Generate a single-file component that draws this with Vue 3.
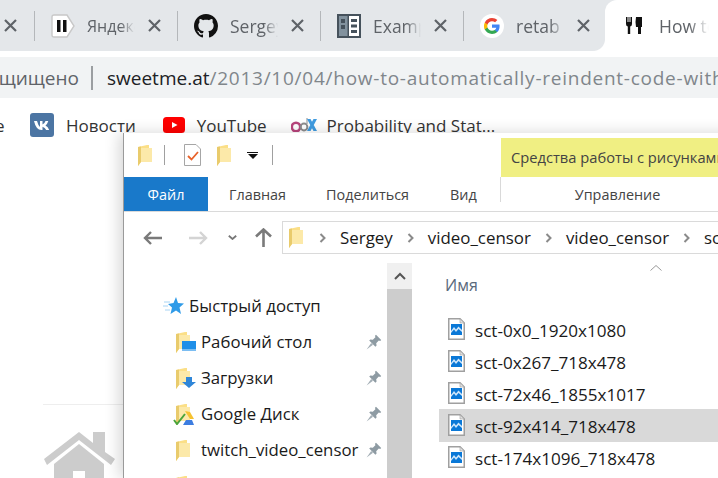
<template>
  <div class="screen">
    <svg class="defs" width="0" height="0">
      <symbol id="folder" viewBox="0 0 14 21">
        <path d="M0 2 L9 0 H11 V3 H14 V17 H3 L0 21 Z" fill="#fbdf87" />
        <path d="M0 2 L3 1.4 V17 L0 21 Z" fill="#e9cb6c" />
        <path d="M3 3 H14 V17 H3 Z" fill="#fce9a9" />
      </symbol>
      <symbol id="pin" viewBox="0 0 16 16">
        <path d="M10 .8 L15.2 6 L14.2 7 L12.8 6.6 L10.2 9.2 L10.6 11.6 L9.4 12.8 L3.2 6.6 L4.4 5.4 L6.8 5.8 L9.4 3.2 L9 1.8 Z" fill="#8e9ba3" />
        <path d="M5.2 9 L.6 15.4 L7 10.8 Z" fill="#a3aeb5" />
      </symbol>
      <symbol id="picfile" viewBox="0 0 17 22">
        <path d="M.75.75 H12 L16.25 5 V21.25 H.75 Z" fill="#fff" stroke="#a0a0a0" stroke-width="1.5" />
        <path d="M12 .75 V5 H16.25 Z" fill="#e0e0e0" stroke="#a0a0a0" stroke-width=".6" />
        <path d="M3 6 H14 V17 H3 Z" fill="#0a78d7" />
        <path d="M3 13 L6 9 L8 11.5 L10.5 8.5 L14 12 V14 L10.5 11 L8 14 L6 11.5 L3 15 Z" fill="#cfe6fa" />
      </symbol>
    </svg>

    <header class="tabstrip">
      <div class="tab tab--cut">
        <svg class="tab__close" viewBox="0 0 13 13"><path d="M1 1 L12 12 M12 1 L1 12" /></svg>
      </div>
      <div v-for="tab in tabs" :key="tab.title" class="tab">
        <svg v-if="tab.icon === 'yandex'" class="tab__icon" viewBox="0 0 24 24">
          <path d="M3 1 H16 L23 12 L16 23 H3 Q1 23 1 21 V3 Q1 1 3 1 Z" fill="#fff" stroke="#c8c8c8" stroke-width="1.4" />
          <path d="M6 6 H9.5 V18 H6 Z M12 6 H15.5 V18 H12 Z" fill="#111" />
        </svg>
        <svg v-else-if="tab.icon === 'github'" class="tab__icon" viewBox="0 0 16 16">
          <path fill="#111" d="M8 0C3.58 0 0 3.58 0 8c0 3.54 2.29 6.53 5.47 7.59.4.07.55-.17.55-.38 0-.19-.01-.82-.01-1.49-2.01.37-2.53-.49-2.69-.94-.09-.23-.48-.94-.82-1.13-.28-.15-.68-.52-.01-.53.63-.01 1.08.58 1.23.82.72 1.21 1.87.87 2.33.66.07-.52.28-.87.51-1.07-1.78-.2-3.64-.89-3.64-3.95 0-.87.31-1.59.82-2.15-.08-.2-.36-1.02.08-2.12 0 0 .67-.21 2.2.82.64-.18 1.32-.27 2-.27s1.36.09 2 .27c1.53-1.04 2.2-.82 2.2-.82.44 1.1.16 1.92.08 2.12.51.56.82 1.27.82 2.15 0 3.07-1.87 3.75-3.65 3.95.29.25.54.73.54 1.48 0 1.07-.01 1.93-.01 2.2 0 .21.15.46.55.38A8.01 8.01 0 0 0 16 8c0-4.42-3.58-8-8-8z" />
        </svg>
        <svg v-else-if="tab.icon === 'example'" class="tab__icon" viewBox="0 0 24 24">
          <path d="M0 0 H24 V24 H0 Z" fill="#46525c" />
          <path d="M2 2 H10.5 V22 H2 Z" fill="#82929e" />
          <path d="M4 5 H8 V9 H4 Z M4 11 H8 V15 H4 Z" fill="#46525c" />
          <path d="M12 2 H22 V22 H12 Z" fill="#fff" />
          <path d="M14 5 H20 V8 H14 Z M14 10.5 H20 V13.5 H14 Z M14 16 H20 V19 H14 Z" fill="#46525c" />
        </svg>
        <svg v-else class="tab__icon" viewBox="0 0 24 24">
          <circle cx="12" cy="12" r="12" fill="#fff" />
          <path d="M19.6 12.2c0-.6-.05-1.1-.15-1.6H12v3.1h4.3c-.2 1-.75 1.85-1.6 2.4v2h2.6c1.5-1.4 2.3-3.4 2.3-5.9z" fill="#4285f4" />
          <path d="M12 20c2.15 0 3.95-.7 5.3-1.9l-2.6-2c-.7.5-1.6.75-2.7.75-2.1 0-3.85-1.4-4.5-3.3H4.8v2.05C6.15 18.2 8.85 20 12 20z" fill="#34a853" />
          <path d="M7.5 13.55c-.35-1-.35-2.1 0-3.1V8.4H4.8c-1.1 2.2-1.1 5 0 7.2z" fill="#fbbc05" />
          <path d="M12 7.15c1.2 0 2.25.4 3.1 1.2l2.3-2.3C16 4.75 14.15 4 12 4 8.85 4 6.15 5.8 4.8 8.4l2.7 2.05c.65-1.9 2.4-3.3 4.5-3.3z" fill="#ea4335" />
        </svg>
        <span class="tab__title" :class="{ 'tab__title--ru': tab.icon === 'yandex' }">{{ tab.title }}</span>
        <svg class="tab__close" viewBox="0 0 13 13"><path d="M1 1 L12 12 M12 1 L1 12" /></svg>
      </div>
      <div class="tab-active">
        <svg class="tab-active__icon" viewBox="0 0 17 17">
          <path d="M0 0 H1.5 V5 H2.5 V0 H3.5 V5 H4.5 V0 H6 V7 Q6 9 4.2 9.5 V17 H1.8 V9.5 Q0 9 0 7 Z" fill="#111" />
          <path d="M10 0 H16 V10 H15 V17 H12 V10 H10 Q9 5 10 0 Z" fill="#111" />
        </svg>
        <span class="tab__title tab__title--active">How to automatically</span>
      </div>
    </header>

    <div class="omnibox">
      <span class="omnibox__secure"><span>Не защищено</span></span>
      <span class="omnibox__sep"></span>
      <span class="omnibox__url"><b>sweetme.at</b>/2013/10/04/how-to-automatically-reindent-code-with-sublime-text</span>
    </div>

    <nav class="bookmarks">
      <span class="bookmarks__cut">е</span>
      <svg class="bm-icon" viewBox="0 0 24 24">
        <rect width="24" height="24" rx="3" fill="#4c75a3" />
        <path d="M4 8 H7 Q8 12 10 14 V8 H12.5 V11.5 Q14.5 11 15.5 8 H18.3 Q17.4 11 15.5 12.6 Q18 14 19.2 17 H16.2 Q15 14.5 12.5 13.8 V17 H11.5 Q6 17 4 8 Z" fill="#fff" />
      </svg>
      <span class="bm-label">Новости</span>
      <svg class="bm-icon bm-icon--yt" viewBox="0 0 22 16">
        <rect width="22" height="16" rx="3.5" fill="#f00" />
        <path d="M9 5 L14.5 8 L9 11 Z" fill="#fff" />
      </svg>
      <span class="bm-label bm-label--yt">YouTube</span>
      <svg class="bm-icon bm-icon--edx" viewBox="0 0 26 14">
        <circle cx="5" cy="9" r="4.2" fill="none" stroke="#b8457c" stroke-width="2.6" />
        <circle cx="13" cy="9" r="3.4" fill="none" stroke="#8d8d8d" stroke-width="2" />
        <path d="M15.5 0 H16.5 V6 H15.5 Z" fill="#8d8d8d" />
        <path d="M16 1 H19.5 L26 13 H22.5 Z M22.5 1 H26 L19.5 13 H16 Z" fill="#3f9be0" />
      </svg>
      <span class="bm-label">Probability and Stat...</span>
    </nav>

    <main class="page">
      <div class="page__rule"></div>
      <svg class="page__home" viewBox="0 0 72 48">
        <path d="M1 27 L36 0 L50 11 V0 H62 V20 L72 27 L68 33 L36 8 L4 33 Z" fill="#ccc" />
        <path d="M11 32 L36 12 L61 32 V48 H42 V39 H30 V48 H11 Z" fill="#ccc" />
      </svg>
    </main>

    <section class="win">
      <div class="win__top">
        <div class="qat">
          <svg class="qat__folder"><use href="#folder" /></svg>
          <span class="qat__sep"></span>
          <svg class="qat__check" viewBox="0 0 17 22">
            <path d="M.5.5 H12 L16.5 5 V21.5 H.5 Z" fill="#fff" stroke="#a6a6a6" />
            <path d="M4 12 L7.5 15.5 L14 8" fill="none" stroke="#e8622a" stroke-width="1.8" />
          </svg>
          <svg class="qat__folder"><use href="#folder" /></svg>
          <span class="qat__menu"><i></i><b></b></span>
          <span class="qat__sep qat__sep--end"></span>
        </div>
        <div class="ctx-title">Средства работы с рисунками</div>
      </div>

      <div class="ribbon">
        <span class="ribbon__file">Файл</span>
        <span class="ribbon__tab ribbon__tab--main">Главная</span>
        <span class="ribbon__tab ribbon__tab--share">Поделиться</span>
        <span class="ribbon__tab ribbon__tab--view">Вид</span>
        <span class="ribbon__manage">Управление</span>
      </div>

      <div class="navbar">
        <div class="navbar__btns">
          <svg class="nav-back" viewBox="0 0 19 14"><path d="M8 1 L2 7 L8 13 M2 7 H19" fill="none" stroke="#7a7a7a" stroke-width="2.4" /></svg>
          <svg class="nav-fwd" viewBox="0 0 19 14"><path d="M11 1 L17 7 L11 13 M17 7 H0" fill="none" stroke="#d4d4d4" stroke-width="2.4" /></svg>
          <svg class="nav-down" viewBox="0 0 9 5"><path d="M.8.8 L4.5 4 L8.2.8" fill="none" stroke="#777" stroke-width="1.8" /></svg>
          <svg class="nav-up" viewBox="0 0 17 19"><path d="M1 8.5 L8.5 1.5 L16 8.5 M8.5 1.5 V19" fill="none" stroke="#7a7a7a" stroke-width="2.6" /></svg>
        </div>
        <div class="crumbs">
          <svg class="crumbs__folder"><use href="#folder" /></svg>
          <template v-for="c in crumbs" :key="c.id">
            <svg class="crumbs__arrow" viewBox="0 0 7 10"><path d="M1.5 1 L5.5 5 L1.5 9" fill="none" stroke="#8a8a8a" stroke-width="2" /></svg>
            <span class="crumbs__name">{{ c.name }}</span>
          </template>
        </div>
      </div>

      <div class="panes">
        <aside class="tree">
          <div class="tree__list">
            <div class="tree__quick">
              <svg class="tree__star" viewBox="0 0 21 18">
                <path d="M13 0 L15 6 L21 6.5 L16.5 10.5 L18 17 L13 13.5 L7.5 17 L9 10.5 L5 7 L10.5 6 Z" fill="#2f9be8" />
                <path d="M1 5 H7 M0 9 H5 M2 13 H7" stroke="#a8d4f4" stroke-width="1" />
              </svg>
              <span class="tree__name">Быстрый доступ</span>
            </div>
            <div v-for="item in tree" :key="item.name" class="tree__row">
              <span class="tree__icon">
                <svg class="tree__folder"><use href="#folder" /></svg>
                <svg v-if="item.badge === 'desktop'" class="tree__badge" viewBox="0 0 14 11">
                  <path d="M0 0 H14 V10 H0 Z" fill="#1f8fe8" />
                  <path d="M0 9 H14" stroke="#d7ecfb" />
                </svg>
                <svg v-if="item.badge === 'down'" class="tree__badge" viewBox="0 0 14 11">
                  <path d="M4 0 H10 V5 H14 L7 11 L0 5 H4 Z" fill="#2f86d8" />
                </svg>
                <svg v-if="item.badge === 'drive'" class="tree__badge tree__badge--drive" viewBox="0 0 21 14">
                  <path d="M12 0 L17 8 H21 L17 1 Z" fill="#f6c231" />
                  <path d="M10 14 H21 L19 9 H13 Z" fill="#3d7de0" />
                  <path d="M1 9 L4 13 L12 3" fill="none" stroke="#4aa43a" stroke-width="2" />
                </svg>
              </span>
              <span class="tree__name">{{ item.name }}</span>
              <svg class="tree__pin"><use href="#pin" /></svg>
            </div>
          </div>
          <div class="scroll">
            <div class="scroll__btn">
              <svg viewBox="0 0 12 8" width="12" height="8"><path d="M1 7 L6 2 L11 7" fill="none" stroke="#555" stroke-width="2" /></svg>
            </div>
            <div class="scroll__thumb"></div>
          </div>
        </aside>

        <div class="files">
          <svg class="files__sort" viewBox="0 0 12 6"><path d="M.5 5.5 L6 .5 L11.5 5.5" fill="none" stroke="#999" /></svg>
          <div class="files__head">Имя</div>
          <div
            v-for="file in files"
            :key="file.name"
            class="file"
            :class="{ 'file--sel': file.selected }"
          >
            <svg class="file__icon"><use href="#picfile" /></svg>
            <span class="file__name">{{ file.name }}</span>
          </div>
        </div>
      </div>
    </section>
  </div>
</template>

<script setup>
const tabs = [
  { title: 'Яндекс', icon: 'yandex' },
  { title: 'Sergey', icon: 'github' },
  { title: 'Example', icon: 'example' },
  { title: 'retab', icon: 'google' }
];

const crumbs = [
  { id: 0, name: 'Sergey' },
  { id: 1, name: 'video_censor' },
  { id: 2, name: 'video_censor' },
  { id: 3, name: 'screenshots' }
];

const tree = [
  { name: 'Рабочий стол', badge: 'desktop' },
  { name: 'Загрузки', badge: 'down' },
  { name: 'Google Диск', badge: 'drive' },
  { name: 'twitch_video_censor' },
  { name: 'video_censor' }
];

const files = [
  { name: 'sct-0x0_1920x1080' },
  { name: 'sct-0x267_718x478' },
  { name: 'sct-72x46_1855x1017' },
  { name: 'sct-92x414_718x478', selected: true },
  { name: 'sct-174x1096_718x478' }
];
</script>

<style>
html, body {
  margin: 0;
  background: #fff;
  overflow: hidden;
}
</style>

<style scoped>
.screen {
  position: relative;
  width: 718px;
  height: 478px;
  overflow: hidden;
  font-family: "Open Sans", "Noto Sans", sans-serif;
  color: #111;
  background: #fff;
}

.defs {
  position: absolute;
}

.tabstrip {
  height: 51px;
  background: #e4e7ea;
  display: flex;
}

.tab {
  flex: 0 0 143px;
  height: 51px;
  box-sizing: border-box;
  display: flex;
  align-items: center;
  padding-left: 17px;
  position: relative;
}

.tab::after {
  content: "";
  position: absolute;
  right: -1px;
  top: 11px;
  height: 30px;
  width: 1px;
  background: #b4b7ba;
}

.tab--cut {
  flex-basis: 34px;
  padding-left: 4px;
}

.tab:nth-child(5)::after {
  display: none;
}

.tab__icon {
  width: 24px;
  height: 24px;
  flex: none;
}

.tab__title {
  margin-left: 12px;
  width: 48px;
  flex: none;
  overflow: hidden;
  white-space: nowrap;
  font-size: 17.5px;
  color: #5f6368;
  -webkit-mask-image: linear-gradient(90deg, #000 70%, transparent);
  mask-image: linear-gradient(90deg, #000 70%, transparent);
}

.tab__title--ru {
  font-size: 16px;
}

.tab__close {
  width: 13px;
  height: 13px;
  margin-left: 13px;
  flex: none;
  fill: none;
  stroke: #5f6368;
  stroke-width: 2.2;
}

.tab--cut .tab__close {
  margin-left: 0;
}

.tab-active {
  flex: 1;
  position: relative;
  background: #fff;
  border-radius: 12px 0 0 0;
  display: flex;
  align-items: center;
  padding-left: 21px;
  margin-left: -1px;
}

.tab-active::before {
  content: "";
  position: absolute;
  left: -12px;
  bottom: 0;
  width: 12px;
  height: 12px;
  background: radial-gradient(circle at 0 0, #e4e7ea 11.5px, #fff 12.5px);
}

.tab-active__icon {
  width: 17px;
  height: 17px;
  flex: none;
}

.tab__title--active {
  margin-left: 16px;
  width: 50px;
  -webkit-mask-image: linear-gradient(90deg, #000 60%, transparent);
  mask-image: linear-gradient(90deg, #000 60%, transparent);
}

.omnibox {
  margin-top: 6px;
  height: 41px;
  background: #f1f3f4;
  display: flex;
  align-items: center;
  font-size: 19px;
  white-space: nowrap;
  overflow: hidden;
  color: #80868b;
}

.omnibox__secure {
  flex: 0 0 79px;
  display: flex;
  justify-content: flex-end;
  overflow: hidden;
  color: #5f6368;
}

.omnibox__secure span {
  flex: none;
}

.omnibox__sep {
  flex: none;
  width: 2px;
  height: 24px;
  margin: 0 14px 0 12px;
  background: #9b9ea1;
}

.omnibox__url {
  letter-spacing: 0.75px;
}

.omnibox__url b {
  font-weight: 400;
  color: #202124;
  letter-spacing: 0;
}

.bookmarks {
  height: 54px;
  display: flex;
  align-items: center;
  font-size: 17px;
  color: #333;
  white-space: nowrap;
}

.bookmarks__cut {
  flex: 0 0 30px;
  margin-left: -5px;
  margin-right: 5px;
}

.bm-icon {
  width: 24px;
  height: 24px;
  flex: none;
}

.bm-icon--yt {
  width: 22px;
  height: 16px;
}

.bm-icon--edx {
  width: 26px;
  height: 14px;
}

.bm-label {
  margin: 0 27px 0 12px;
}

.bm-label--yt {
  margin: 0 24px 0 12px;
}

.bm-icon--edx + .bm-label {
  margin-left: 10px;
}

.page {
  padding: 252px 0 0 43px;
}

.page__rule {
  width: 80px;
  height: 1px;
  background: #eee;
}

.page__home {
  display: block;
  width: 72px;
  height: 48px;
  margin-top: 27px;
}

.win {
  position: absolute;
  left: 123px;
  top: 133px;
  width: 620px;
  height: 345px;
  box-sizing: border-box;
  background: #fff;
  border-left: 1px solid #9a9a9a;
  box-shadow: -4px 0 14px rgba(0, 0, 0, 0.16);
  display: flex;
  flex-direction: column;
}

.win__top {
  height: 44px;
  flex: none;
  display: flex;
  justify-content: space-between;
}

.qat {
  display: flex;
  align-items: center;
  padding-left: 14px;
}

.qat__folder {
  width: 14px;
  height: 21px;
  flex: none;
}

.qat__sep {
  width: 1px;
  height: 20px;
  background: #a0a0a0;
  margin: 0 19px 0 12px;
}

.qat__sep--end {
  margin: 0 0 0 14px;
}

.qat__check {
  width: 17px;
  height: 22px;
  margin-right: 16px;
}

.qat__menu {
  margin-left: 16px;
  display: flex;
  flex-direction: column;
  align-items: center;
  gap: 1px;
}

.qat__menu i {
  width: 11px;
  height: 1px;
  background: #111;
}

.qat__menu b {
  border: 5px solid transparent;
  border-top: 5px solid #111;
  border-bottom: 0;
}

.ctx-title {
  margin-top: 5px;
  width: 239px;
  margin-right: 3px;
  flex: none;
  background: #f0ef83;
  font-size: 14.7px;
  line-height: 39px;
  padding-left: 10px;
  color: #444;
  white-space: nowrap;
  box-sizing: border-box;
}

.ribbon {
  height: 35px;
  box-sizing: border-box;
  flex: none;
  display: flex;
  align-items: center;
  font-size: 14.4px;
  color: #444;
  border-bottom: 1px solid #dadada;
}

.ribbon__file {
  width: 84px;
  align-self: stretch;
  background: #1979ca;
  color: #fff;
  display: flex;
  align-items: center;
  justify-content: center;
}

.ribbon__tab--main { margin-left: 21px; }
.ribbon__tab--share { margin-left: 40px; }
.ribbon__tab--view { margin-left: 41px; }

.ribbon__manage {
  margin-left: 23px;
  padding-left: 74px;
  border-left: 1px solid #d9d9d9;
  align-self: flex-start;
  height: 25px;
  line-height: 36px;
}

.navbar {
  height: 51px;
  flex: none;
  display: flex;
  align-items: center;
}

.navbar__btns {
  width: 158px;
  flex: none;
  height: 20px;
  display: flex;
  align-items: center;
  padding-left: 19px;
  box-sizing: border-box;
}

.nav-back, .nav-fwd { width: 19px; height: 14px; flex: none; }
.nav-fwd { margin-left: 27px; }
.nav-down { width: 9px; height: 5px; flex: none; margin-left: 20px; }
.nav-up { width: 17px; height: 19px; flex: none; margin-left: 18px; }

.crumbs {
  height: 31px;
  flex: 1;
  border: 1px solid #dadada;
  border-right: 0;
  display: flex;
  align-items: center;
  padding-left: 6px;
  font-size: 16.9px;
  color: #1a1a1a;
  white-space: nowrap;
  overflow: hidden;
}

.crumbs__folder {
  width: 14px;
  height: 21px;
  flex: none;
  margin-right: 2px;
}

.crumbs__arrow {
  width: 7px;
  height: 10px;
  flex: none;
  margin: 0 14px;
}

.panes {
  flex: 1;
  min-height: 0;
  display: flex;
  overflow: hidden;
}

.tree {
  width: 288px;
  flex: none;
  display: flex;
}

.tree__list {
  flex: 1;
  padding: 25px 0 0 39px;
  font-size: 16.8px;
  color: #1a1a1a;
  overflow: hidden;
  white-space: nowrap;
}

.tree__quick {
  height: 36px;
  display: flex;
  align-items: center;
  gap: 5px;
}

.tree__star {
  width: 21px;
  height: 18px;
  flex: none;
}

.tree__row {
  height: 36px;
  display: flex;
  align-items: center;
  padding-left: 13px;
}

.tree__icon {
  position: relative;
  width: 25px;
  height: 21px;
  flex: none;
}

.tree__folder {
  width: 14px;
  height: 21px;
  display: block;
}

.tree__badge {
  position: absolute;
  right: 5px;
  bottom: 1px;
  width: 14px;
  height: 11px;
}

.tree__badge--drive {
  right: auto;
  left: -3px;
  width: 21px;
  height: 14px;
  bottom: 0;
}

.tree__name {
  flex: 1;
  min-width: 0;
  margin-top: -2px;
}

.tree__pin {
  width: 16px;
  height: 16px;
  flex: none;
  margin-right: 5px;
}

.scroll {
  width: 25px;
  flex: none;
  display: flex;
  flex-direction: column;
}

.scroll__btn {
  height: 26px;
  flex: none;
  background: #f0f0f0;
  display: flex;
  align-items: center;
  justify-content: center;
}

.scroll__thumb {
  flex: 1;
  background: #cdcdcd;
}

.files {
  flex: 1;
  position: relative;
  padding: 0 0 0 27px;
  font-size: 17.1px;
  color: #1a1a1a;
  white-space: nowrap;
}

.files__sort {
  position: absolute;
  left: 238px;
  top: 2px;
  width: 12px;
  height: 6px;
}

.files__head {
  padding: 11px 0 0 6px;
  height: 39px;
  color: #5a6a7d;
  font-size: 16px;
  line-height: 22px;
}

.file {
  height: 32px;
  display: flex;
  align-items: center;
  padding-left: 9px;
  gap: 10px;
}

.file--sel {
  background: #d9d9d9;
  box-shadow: 0 1px 0 #d9d9d9;
}

.file__icon {
  width: 17px;
  height: 22px;
  flex: none;
}

.file__name {
  margin-top: 3px;
}
</style>
